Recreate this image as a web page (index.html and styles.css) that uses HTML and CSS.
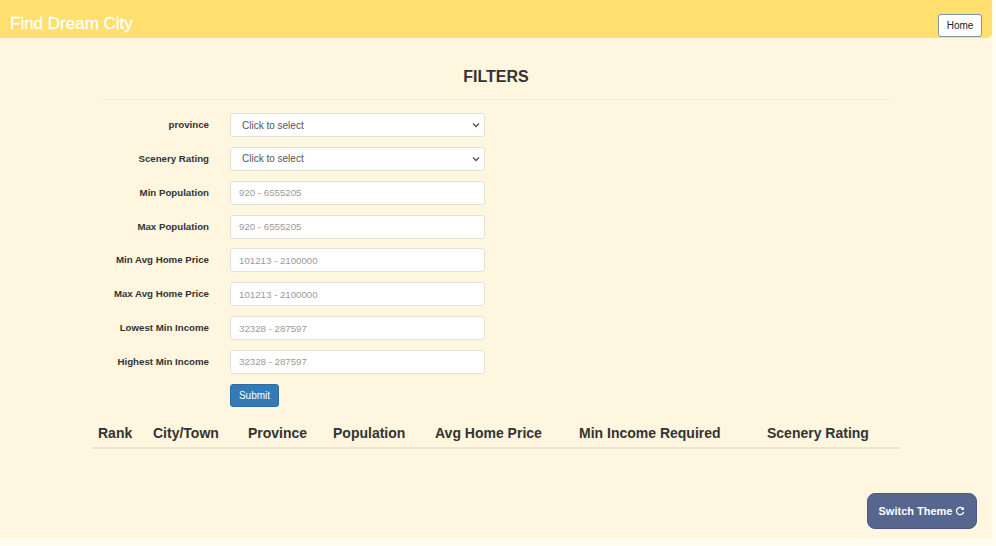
FILE: index.html
```html
<!DOCTYPE html>
<html>
<head>
<meta charset="utf-8">
<link rel="stylesheet" href="styles.css">
</head>
<body>
<div class="app">
  <header class="topbar">
    <div class="brand">Find Dream City</div>
    <button class="home-btn">Home</button>
  </header>
  <main class="content">
    <h2 class="title">FILTERS</h2>
    <form class="filters">
      <label class="lbl">province</label>
      <div class="select-wrap">
        <select class="field select"><option>Click to select</option></select>
        <svg class="chev" width="8" height="6" viewBox="0 0 8 6"><path d="M1 1.5 L4 4.5 L7 1.5" fill="none" stroke="#555" stroke-width="1.4"/></svg>
      </div>
      <label class="lbl">Scenery Rating</label>
      <div class="select-wrap">
        <select class="field select"><option>Click to select</option></select>
        <svg class="chev" width="8" height="6" viewBox="0 0 8 6"><path d="M1 1.5 L4 4.5 L7 1.5" fill="none" stroke="#555" stroke-width="1.4"/></svg>
      </div>
      <label class="lbl">Min Population</label>
      <input class="field" placeholder="920 - 6555205">
      <label class="lbl">Max Population</label>
      <input class="field" placeholder="920 - 6555205">
      <label class="lbl">Min Avg Home Price</label>
      <input class="field" placeholder="101213 - 2100000">
      <label class="lbl">Max Avg Home Price</label>
      <input class="field" placeholder="101213 - 2100000">
      <label class="lbl">Lowest Min Income</label>
      <input class="field" placeholder="32328 - 287597">
      <label class="lbl">Highest Min Income</label>
      <input class="field" placeholder="32328 - 287597">
      <span></span>
      <div class="submit-cell"><button type="button" class="submit">Submit</button></div>
    </form>
    <table class="results">
      <colgroup>
        <col class="c1"><col class="c2"><col class="c3"><col class="c4"><col class="c5"><col class="c6"><col class="c7">
      </colgroup>
      <thead>
        <tr>
          <th>Rank</th><th>City/Town</th><th>Province</th><th>Population</th><th>Avg Home Price</th><th>Min Income Required</th><th>Scenery Rating</th>
        </tr>
      </thead>
    </table>
  </main>
  <button class="theme-btn">Switch Theme
    <svg width="10" height="10" viewBox="0 0 10 10"><path d="M8.2 3.2 A3.6 3.6 0 1 0 8.6 6" fill="none" stroke="#fff" stroke-width="1.3"/><path d="M8.9 1 L8.9 3.9 L6 3.9 Z" fill="#fff"/></svg>
  </button>
</div>
</body>
</html>
```
FILE: styles.css
```css
* { box-sizing: border-box; }
html, body { margin: 0; padding: 0; }
body {
  background: #fffbef;
  font-family: "Liberation Sans", Arial, Helvetica, sans-serif;
  color: #333;
}
.app {
  position: relative;
  width: 992px;
  height: 538px;
  background: #fef6df;
}
.topbar {
  height: 38px;
  background: #ffdf6e;
  border-bottom-right-radius: 5px;
  display: flex;
  align-items: flex-start;
  justify-content: space-between;
  padding: 0 10px 0 10px;
}
.brand {
  color: #fff;
  font-size: 17px;
  line-height: 20px;
  margin-top: 14px;
  -webkit-text-stroke: 0.3px #fff;
}
.home-btn {
  margin-top: 14px;
  height: 23px;
  width: 44px;
  padding: 0;
  background: #fff;
  border: 1px solid #7d97a6;
  border-radius: 3px;
  font-family: inherit;
  font-size: 10px;
  color: #222;
}
.content {
  width: 808px;
  margin: 0 auto;
  padding: 0;
}
.title {
  margin: 29px 10px 0;
  text-align: center;
  font-size: 16px;
  line-height: 20px;
  font-weight: bold;
  color: #333;
  padding-bottom: 12px;
  border-bottom: 1px solid #f4ecd5;
}
.filters {
  display: grid;
  grid-template-columns: 117px 255px;
  grid-auto-rows: 24px;
  column-gap: 21px;
  row-gap: 9.85px;
  margin-top: 13px;
}
.lbl {
  text-align: right;
  font-size: 9.7px;
  font-weight: bold;
  color: #333;
  line-height: 24px;
  white-space: nowrap;
}
.field {
  width: 255px;
  height: 24px;
  border: 1px solid #e3e0d8;
  border-radius: 3px;
  background: #fff;
  font-family: inherit;
  font-size: 9.7px;
  padding: 0 8px;
  color: #555;
  outline: none;
}
.field::placeholder { color: #9a9a9a; }
.select-wrap { position: relative; width: 255px; height: 24px; }
.select {
  appearance: none;
  -webkit-appearance: none;
  color: #555;
  font-size: 10px;
  padding-left: 11px;
}
.chev { position: absolute; right: 5px; top: 9px; }
.submit {
  height: 23px;
  width: 49px;
  padding: 0;
  border: 1px solid #2e6da4;
  border-radius: 3px;
  background: #337ab7;
  color: #fff;
  font-family: inherit;
  font-size: 10px;
}
.results {
  width: 808px;
  margin-top: 11px;
  border-collapse: collapse;
  table-layout: fixed;
}
.results th {
  text-align: left;
  font-size: 14px;
  font-weight: bold;
  color: #333;
  padding: 5px 6px 5px;
  line-height: 18px;
  border-bottom: 2px solid #ebe4d2;
  white-space: nowrap;
}
.c1 { width: 55px; }
.c2 { width: 95px; }
.c3 { width: 85px; }
.c4 { width: 102px; }
.c5 { width: 144px; }
.c6 { width: 188px; }
.c7 { width: 139px; }
.theme-btn {
  position: absolute;
  left: 867px;
  top: 493px;
  width: 110px;
  height: 36px;
  background: #56668f;
  border: 1px solid #4a5a83;
  border-radius: 8px;
  color: #fff;
  font-family: inherit;
  font-weight: bold;
  font-size: 11px;
  display: flex;
  align-items: center;
  justify-content: center;
  gap: 3px;
  padding: 0;
}
```
